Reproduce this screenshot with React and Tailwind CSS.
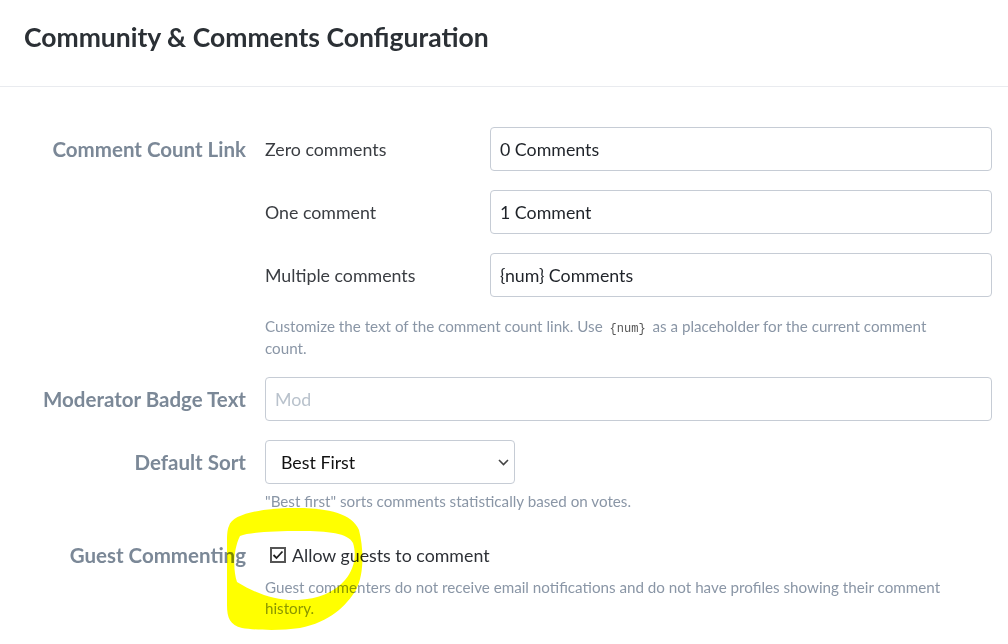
import React from "react";

const font = { fontFamily: "Lato, 'Open Sans', sans-serif" };

function TextInput({ value, placeholder, className = "" }) {
  return (
    <div
      className={
        "h-[44px] rounded-[4px] border border-[#c6ccd5] bg-white pl-[9px] pr-[10px] flex items-center text-[17.8px] " +
        className
      }
    >
      {value ? (
        <span className="text-[#1f2329]">{value}</span>
      ) : (
        <span className="text-[#b9c2cc]">{placeholder}</span>
      )}
    </div>
  );
}

function Highlight() {
  return (
    <svg
      className="pointer-events-none absolute left-0 top-0 mix-blend-multiply"
      width="1008"
      height="644"
      viewBox="0 0 1008 644"
    >
      <path
        fillRule="evenodd"
        fill="#ffff00"
        d="M 229 526 C 232 514, 262 508, 296 508 C 330 508, 352 514, 359 530 C 364 550, 364 575, 356 590 C 346 606, 330 622, 300 628 C 280 631, 255 630, 242 628 C 230 625, 227 618, 227 605 L 227 545 C 227 536, 227 530, 229 526 Z M 240 536 C 250 532, 275 531, 300 531 C 328 531, 348 533, 353 543 C 357 555, 354 570, 345 580 C 335 592, 318 599, 298 600 C 278 601, 258 595, 237 582 C 233 570, 233 550, 240 536 Z"
      />
    </svg>
  );
}

export default function App() {
  return (
    <div className="relative w-[1008px] h-[644px] overflow-hidden bg-white" style={font}>
      <div className="h-[87px] border-b border-[#e9ebef] px-6 pt-[22px]">
        <h1 className="text-[26.5px] leading-[30px] font-bold text-[#2b3035]">
          Community &amp; Comments Configuration
        </h1>
      </div>

      <div className="pt-[40px] pr-4">
        <div className="grid grid-cols-[246px_1fr] gap-x-[19px]">
          {/* Comment Count Link */}
          <div className="text-right text-[20.5px] font-bold leading-[44px] text-[#7b8897]">
            Comment Count Link
          </div>
          <div>
            <div className="flex flex-col gap-[19px]">
              {[
                ["Zero comments", "0 Comments"],
                ["One comment", "1 Comment"],
                ["Multiple comments", "{num} Comments"],
              ].map(([label, val]) => (
                <div key={label} className="flex">
                  <div className="w-[225px] text-[17.8px] leading-[44px] text-[#3a3d42]">{label}</div>
                  <TextInput value={val} className="flex-1" />
                </div>
              ))}
            </div>
            <p className="mt-[18px] pr-[34px] text-[15.2px] leading-[22px] text-[#8a96a6]">
              Customize the text of the comment count link. Use{" "}
              <code
                className="px-[3px] text-[12px] leading-none text-[#555]"
                style={{ fontFamily: "'Liberation Mono', monospace" }}
              >
                {"{num}"}
              </code>{" "}
              as a placeholder for the current comment count.
            </p>
          </div>

          {/* Moderator Badge Text */}
          <div className="mt-[18px] text-right text-[20.5px] font-bold leading-[44px] text-[#7b8897]">
            Moderator Badge Text
          </div>
          <div className="mt-[18px]">
            <TextInput placeholder="Mod" />
          </div>

          {/* Default Sort */}
          <div className="mt-[19px] text-right text-[20.5px] font-bold leading-[44px] text-[#7b8897]">
            Default Sort
          </div>
          <div className="mt-[19px]">
            <div className="relative flex h-[44px] w-[250px] items-center rounded-[4px] border border-[#c6ccd5] bg-white px-[15px] text-[17.8px] text-[#111]">
              Best First
              <svg
                className="absolute right-[5px] top-[18px]"
                width="11"
                height="7"
                viewBox="0 0 11 7"
                fill="none"
              >
                <path d="M1 1 L5.5 5.5 L10 1" stroke="#444" strokeWidth="1.6" />
              </svg>
            </div>
            <p className="mt-[6px] text-[15.2px] leading-[22px] text-[#8a96a6]">
              "Best first" sorts comments statistically based on votes.
            </p>
          </div>

          {/* Guest Commenting */}
          <div className="mt-[28px] text-right text-[20.5px] font-bold leading-[30px] text-[#7b8897]">
            Guest Commenting
          </div>
          <div className="mt-[28px]">
            <div className="flex h-[30px] items-center">
              <div className="ml-[5px] mr-[6px] flex h-[16px] w-[16px] items-center justify-center border-2 border-[#555] bg-white">
                <svg width="12" height="10" viewBox="0 0 12 10" fill="none">
                  <path d="M1.5 5 L4.5 8 L10.5 1.5" stroke="#222" strokeWidth="1.8" />
                </svg>
              </div>
              <span className="text-[17.8px] text-[#2d3036]">Allow guests to comment</span>
            </div>
            <p className="mt-[7px] pr-[34px] text-[15.2px] leading-[21px] text-[#8a96a6]">
              Guest commenters do not receive email notifications and do not have profiles showing their comment
              history.
            </p>
          </div>
        </div>
      </div>

      <Highlight />
    </div>
  );
}
